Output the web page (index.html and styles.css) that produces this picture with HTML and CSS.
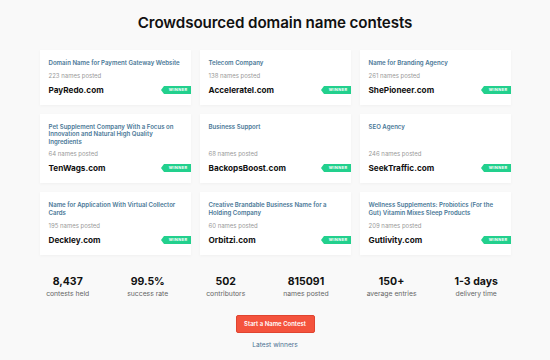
FILE: index.html
```html
<!DOCTYPE html>
<html lang="en">
<head>
  <meta charset="UTF-8" />
  <title>Crowdsourced domain name contests</title>
  <link rel="stylesheet" href="styles.css">
</head>
<body>

  <h1>Crowdsourced domain name contests</h1>

  <div class="contests">
    <div class="card">
      <div class="title">Domain Name for Payment Gateway Website</div>
      <div class="posted">223 names posted</div>
      <div class="row"><span class="domain">PayRedo.com</span><span class="winner">WINNER</span></div>
    </div>
    <div class="card">
      <div class="title">Telecom Company</div>
      <div class="posted">138 names posted</div>
      <div class="row"><span class="domain">Acceleratel.com</span><span class="winner">WINNER</span></div>
    </div>
    <div class="card">
      <div class="title">Name for Branding Agency</div>
      <div class="posted">261 names posted</div>
      <div class="row"><span class="domain">ShePioneer.com</span><span class="winner">WINNER</span></div>
    </div>

    <div class="card">
      <div class="title">Pet Supplement Company With a Focus on Innovation and Natural High Quality Ingredients</div>
      <div class="posted">64 names posted</div>
      <div class="row"><span class="domain">TenWags.com</span><span class="winner">WINNER</span></div>
    </div>
    <div class="card">
      <div class="title">Business Support</div>
      <div class="posted">68 names posted</div>
      <div class="row"><span class="domain">BackopsBoost.com</span><span class="winner">WINNER</span></div>
    </div>
    <div class="card">
      <div class="title">SEO Agency</div>
      <div class="posted">246 names posted</div>
      <div class="row"><span class="domain">SeekTraffic.com</span><span class="winner">WINNER</span></div>
    </div>

    <div class="card">
      <div class="title">Name for Application With Virtual Collector Cards</div>
      <div class="posted">195 names posted</div>
      <div class="row"><span class="domain">Deckley.com</span><span class="winner">WINNER</span></div>
    </div>
    <div class="card">
      <div class="title">Creative Brandable Business Name for a Holding Company</div>
      <div class="posted">60 names posted</div>
      <div class="row"><span class="domain">Orbitzi.com</span><span class="winner">WINNER</span></div>
    </div>
    <div class="card">
      <div class="title">Wellness Supplements: Probiotics (For the Gut) Vitamin Mixes Sleep Products</div>
      <div class="posted">209 names posted</div>
      <div class="row"><span class="domain">Gutlivity.com</span><span class="winner">WINNER</span></div>
    </div>
  </div>

  <div class="stats">
    <div class="stat"><strong>8,437</strong><span>contests held</span></div>
    <div class="stat"><strong>99.5%</strong><span>success rate</span></div>
    <div class="stat"><strong>502</strong><span>contributors</span></div>
    <div class="stat"><strong>815091</strong><span>names posted</span></div>
    <div class="stat"><strong>150+</strong><span>average entries</span></div>
    <div class="stat"><strong>1-3 days</strong><span>delivery time</span></div>
  </div>

  <div class="actions">
    <button class="start">Start a Name Contest</button>
    <a class="latest" href="#">Latest winners</a>
  </div>

</body>
</html>
```

FILE: styles.css
```css
body {
  font-family: Inter, 'Liberation Sans', sans-serif;
  background: #f9f9f9;
  color: #111;
  margin: 0;
  padding: 13px 0 0;
}
h1 {
  font-size: 15.2px;
  font-weight: 600;
  text-align: center;
  margin: 0 0 18px;
  letter-spacing: -0.1px;
}
.contests {
  width: 471px;
  margin: 0 auto;
  display: grid;
  grid-template-columns: repeat(3, 1fr);
  gap: 9px;
}
.card {
  background: #fff;
  box-shadow: 0 1px 3px rgba(0, 0, 0, 0.04);
  padding: 9px 0 9px 9px;
  display: flex;
  flex-direction: column;
}
.title {
  color: #4a7897;
  font-size: 6.1px;
  font-weight: 600;
  line-height: 7.6px;
  padding-right: 5px;
}
.posted {
  color: #9a9a9a;
  font-size: 6px;
  margin-top: auto;
  padding-top: 5px;
  line-height: 8px;
}
.row {
  display: flex;
  align-items: center;
  justify-content: space-between;
  margin-top: 4px;
}
.domain {
  font-size: 8.2px;
  font-weight: 700;
  line-height: 12px;
}
.winner {
  position: relative;
  background: #22d08d;
  color: #fff;
  font-size: 4px;
  font-weight: 700;
  letter-spacing: 0.4px;
  line-height: 8px;
  padding: 0 3px 0 5px;
}
.winner::before {
  content: '';
  position: absolute;
  left: -3px;
  top: 0;
  border-top: 4px solid transparent;
  border-bottom: 4px solid transparent;
  border-right: 3px solid #22d08d;
}
.stats {
  display: flex;
  justify-content: center;
  gap: 38px;
  margin-top: 20px;
  padding-right: 6px;
}
.stat {
  display: flex;
  flex-direction: column;
  align-items: center;
}
.stat strong {
  font-size: 10.5px;
  font-weight: 700;
  line-height: 14px;
}
.stat span {
  color: #666;
  font-size: 6.8px;
  line-height: 10px;
}
.actions {
  display: flex;
  flex-direction: column;
  align-items: center;
  margin-top: 16px;
}
.start {
  background: #f4533d;
  color: #fff;
  border: 1px solid #e04430;
  border-radius: 2px;
  font-family: inherit;
  font-size: 6px;
  font-weight: 600;
  width: 79px;
  height: 18px;
  padding: 0;
  cursor: pointer;
}
.latest {
  color: #4a7090;
  font-size: 6.6px;
  text-decoration: none;
  margin-top: 8px;
}
```
